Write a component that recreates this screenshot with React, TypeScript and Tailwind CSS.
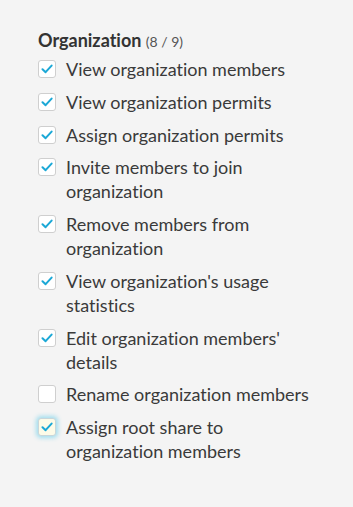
import React from 'react';

const permissions = [
  { label: 'View organization members', checked: true },
  { label: 'View organization permits', checked: true },
  { label: 'Assign organization permits', checked: true },
  { label: 'Invite members to join organization', checked: true },
  { label: 'Remove members from organization', checked: true },
  { label: "View organization's usage statistics", checked: true },
  { label: "Edit organization members' details", checked: true },
  { label: 'Rename organization members', checked: false },
  { label: 'Assign root share to organization members', checked: true, focused: true },
];

const Check: React.FC<{ checked: boolean; focused?: boolean }> = ({ checked, focused }) => (
  <span
    className={
      focused
        ? 'mt-[3px] flex h-[18px] w-[18px] shrink-0 items-center justify-center rounded-[3px] border border-[#c9d6da] bg-[#fdfbe8] shadow-[0_0_4px_2px_rgba(64,196,230,0.45)]'
        : 'mt-[3px] flex h-[18px] w-[18px] shrink-0 items-center justify-center rounded-[3px] border border-[#cfcfcf] bg-white'
    }
  >
    {checked && (
      <svg width="12" height="10" viewBox="0 0 12 10" fill="none">
        <path d="M1.5 5.2 L4.6 8.2 L10.6 1.6" stroke="#1ba8d6" strokeWidth="2" strokeLinecap="round" strokeLinejoin="round" />
      </svg>
    )}
  </span>
);

const App: React.FC = () => {
  return (
    <div className="min-h-screen bg-[#f4f4f4] font-['Lato',sans-serif] text-[#3a3a3a] [font-variant-ligatures:none]">
      <div className="w-[318px] pl-[38px] pt-[28px]">
        <h3 className="mb-[3px] text-[18px] font-bold leading-6 text-[#333]">
          Organization <span className="text-[14px] font-normal text-[#555]">(8 / 9)</span>
        </h3>
        <ul className="flex flex-col gap-[8.75px]">
          {permissions.map((p) => (
            <li key={p.label} className="flex items-start gap-[10px]">
              <Check checked={p.checked} focused={p.focused} />
              <span className="text-[18px] leading-6">{p.label}</span>
            </li>
          ))}
        </ul>
      </div>
    </div>
  );
};

export default App;
